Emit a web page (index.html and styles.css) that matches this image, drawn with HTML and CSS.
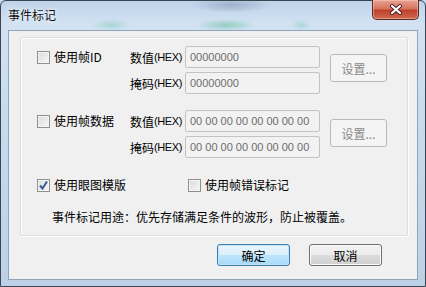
FILE: index.html
```html
<!DOCTYPE html>
<html lang="zh-CN">
<head>
    <meta charset="UTF-8">
    <meta name="viewport" content="width=device-width, initial-scale=1.0">
    <title>事件标记</title>
    <link rel="stylesheet" href="styles.css">
</head>
<body>
    <div class="window">
        <div class="titlebar">
            <span class="title">事件标记</span>
            <button class="close" title="关闭">
                <svg width="14" height="11" viewBox="0 0 14 11">
                    <path d="M3 2 L11 9 M11 2 L3 9" stroke="#4a2020" stroke-width="4" stroke-linecap="round"/>
                    <path d="M3 2 L11 9 M11 2 L3 9" stroke="#ffffff" stroke-width="2.2" stroke-linecap="round"/>
                </svg>
            </button>
        </div>

        <div class="client">
            <div class="panel">
                <!-- 帧ID -->
                <div class="group">
                    <label class="check"><span class="box"></span>使用帧ID</label>
                    <span class="field-label">数值<span class="hex">(HEX)</span></span>
                    <div class="input">00000000</div>
                    <button class="btn-set" disabled>设置...</button>
                    <span class="field-label row2">掩码<span class="hex">(HEX)</span></span>
                    <div class="input row2">00000000</div>
                </div>

                <!-- 帧数据 -->
                <div class="group second">
                    <label class="check"><span class="box"></span>使用帧数据</label>
                    <span class="field-label">数值<span class="hex">(HEX)</span></span>
                    <div class="input">00 00 00 00 00 00 00 00</div>
                    <button class="btn-set" disabled>设置...</button>
                    <span class="field-label row2">掩码<span class="hex">(HEX)</span></span>
                    <div class="input row2">00 00 00 00 00 00 00 00</div>
                </div>

                <div class="options">
                    <label class="check opt">
                        <span class="box checked">
                            <svg width="11" height="11" viewBox="0 0 11 11">
                                <path d="M2 5.5 L4.5 8.5 L9 1.5" fill="none" stroke="#3b5a99" stroke-width="2"/>
                            </svg>
                        </span>使用眼图模版
                    </label>
                    <label class="check"><span class="box"></span>使用帧错误标记</label>
                </div>

                <p class="note">事件标记用途：优先存储满足条件的波形，防止被覆盖。</p>
            </div>

            <div class="actions">
                <button class="btn default">确定</button>
                <button class="btn">取消</button>
            </div>
        </div>
    </div>
</body>
</html>
```

FILE: styles.css
```css
body {
    margin: 0;
    font-family: "Noto Sans CJK SC", "Liberation Sans", sans-serif;
    font-size: 12px;
    color: #000;
    background-color: #c9dbef;
}
.window {
    width: 426px;
    height: 287px;
    box-sizing: border-box;
    border: 1px solid #3b4652;
    border-radius: 6px 6px 0 0;
    background:
        radial-gradient(ellipse 20px 6px at 110px 24px, rgba(90, 190, 150, 0.35), transparent),
        radial-gradient(ellipse 30px 6px at 225px 24px, rgba(70, 180, 130, 0.45), transparent),
        radial-gradient(ellipse 10px 6px at 300px 24px, rgba(90, 190, 150, 0.3), transparent),
        radial-gradient(ellipse 40px 8px at 230px 4px, rgba(90, 110, 140, 0.35), transparent),
        linear-gradient(to bottom, #bfd3ea 0%, #d2e2f3 8%, #c8dbef 40%, #bcd0e8 100%);
    display: flex;
    flex-direction: column;
}
.titlebar {
    height: 29px;
    display: flex;
    justify-content: space-between;
    align-items: flex-start;
}
.title {
    margin: 5px 0 0 7px;
    line-height: 18px;
    font-size: 12px;
    color: #111;
    text-shadow: 0 0 6px #eef5fc, 0 0 3px #ffffff;
}
.close {
    width: 47px;
    height: 20px;
    margin: -1px 6px 0 0;
    padding: 0;
    border: 1px solid #5b2a25;
    border-top: none;
    border-radius: 0 0 5px 5px;
    background: linear-gradient(to bottom, #e7a493 0%, #d7745f 45%, #c0412c 55%, #cf6a4f 100%);
    box-shadow: inset 0 0 0 1px rgba(255, 210, 200, 0.45);
    display: flex;
    align-items: center;
    justify-content: center;
}
.client {
    height: 250px;
    margin: 0 7px;
    box-sizing: border-box;
    border: 1px solid #8fa3bb;
    background-color: #f0f0f0;
    padding: 6px 0 0 11px;
}
.panel {
    width: 388px;
    height: 199px;
    box-sizing: border-box;
    border: 1px solid #d5dfe5;
    border-radius: 2px;
    box-shadow: inset 1px 1px 0 #ffffff, 1px 1px 0 #ffffff;
    padding: 8px 0 0 16px;
}
.group {
    display: grid;
    grid-template-columns: 93px 55px 135px 67px;
    grid-template-rows: 22px 22px;
    row-gap: 4px;
}
.group.second {
    margin-top: 16px;
}
.check {
    display: flex;
    align-items: center;
    gap: 4px;
    line-height: 16px;
    white-space: nowrap;
}
.group .check {
    grid-column: 1;
    grid-row: 1;
}
.box {
    width: 13px;
    height: 13px;
    box-sizing: border-box;
    border: 1px solid #8f8f8f;
    background: linear-gradient(to bottom right, #dcdcdc, #f6f6f6);
    box-shadow: inset 0 0 0 1px #f4f4f4;
    display: flex;
    align-items: center;
    justify-content: center;
}
.field-label {
    grid-column: 2;
    display: flex;
    align-items: center;
    white-space: nowrap;
}
.hex {
    font-family: "Liberation Sans", sans-serif;
    font-size: 11px;
    letter-spacing: -0.4px;
}
.row2 {
    grid-row: 2;
}
.input {
    grid-column: 3;
    box-sizing: border-box;
    border: 1px solid #c3c3c3;
    border-radius: 2px;
    background-color: #f2f2f2;
    padding-left: 4px;
    font-family: "Liberation Sans", sans-serif;
    font-size: 11px;
    line-height: 20px;
    color: #6d6d6d;
    white-space: nowrap;
}
.btn-set {
    grid-column: 4;
    grid-row: 1 / span 2;
    align-self: start;
    margin: 8px 0 0 10px;
    height: 28px;
    padding: 0;
    border: 1px solid #b7babc;
    border-radius: 3px;
    background-color: #f4f4f4;
    font-family: inherit;
    font-size: 12px;
    color: #8a8a8a;
}
.group.second .btn-set {
    margin-top: 9px;
}
.options {
    display: flex;
    margin-top: 19px;
}
.opt {
    width: 151px;
}
.note {
    margin: 16px 0 0 15px;
    line-height: 16px;
}
.actions {
    display: flex;
    justify-content: flex-end;
    gap: 19px;
    margin-top: 8px;
    padding-right: 35px;
}
.btn {
    width: 73px;
    height: 22px;
    padding: 0;
    border: 1px solid #707070;
    border-radius: 3px;
    background: linear-gradient(to bottom, #f2f2f2 0%, #ebebeb 50%, #dddddd 51%, #cfcfcf 100%);
    box-shadow: inset 0 0 0 1px #fbfbfb;
    font-family: inherit;
    font-size: 12px;
    color: #000;
}
.btn.default {
    border-color: #3c7fb1;
    background: linear-gradient(to bottom, #eaf6fd 0%, #d9f0fc 50%, #bee6fd 51%, #a7d9f5 100%);
    box-shadow: inset 0 0 0 1px #bfe4f8;
}
```
